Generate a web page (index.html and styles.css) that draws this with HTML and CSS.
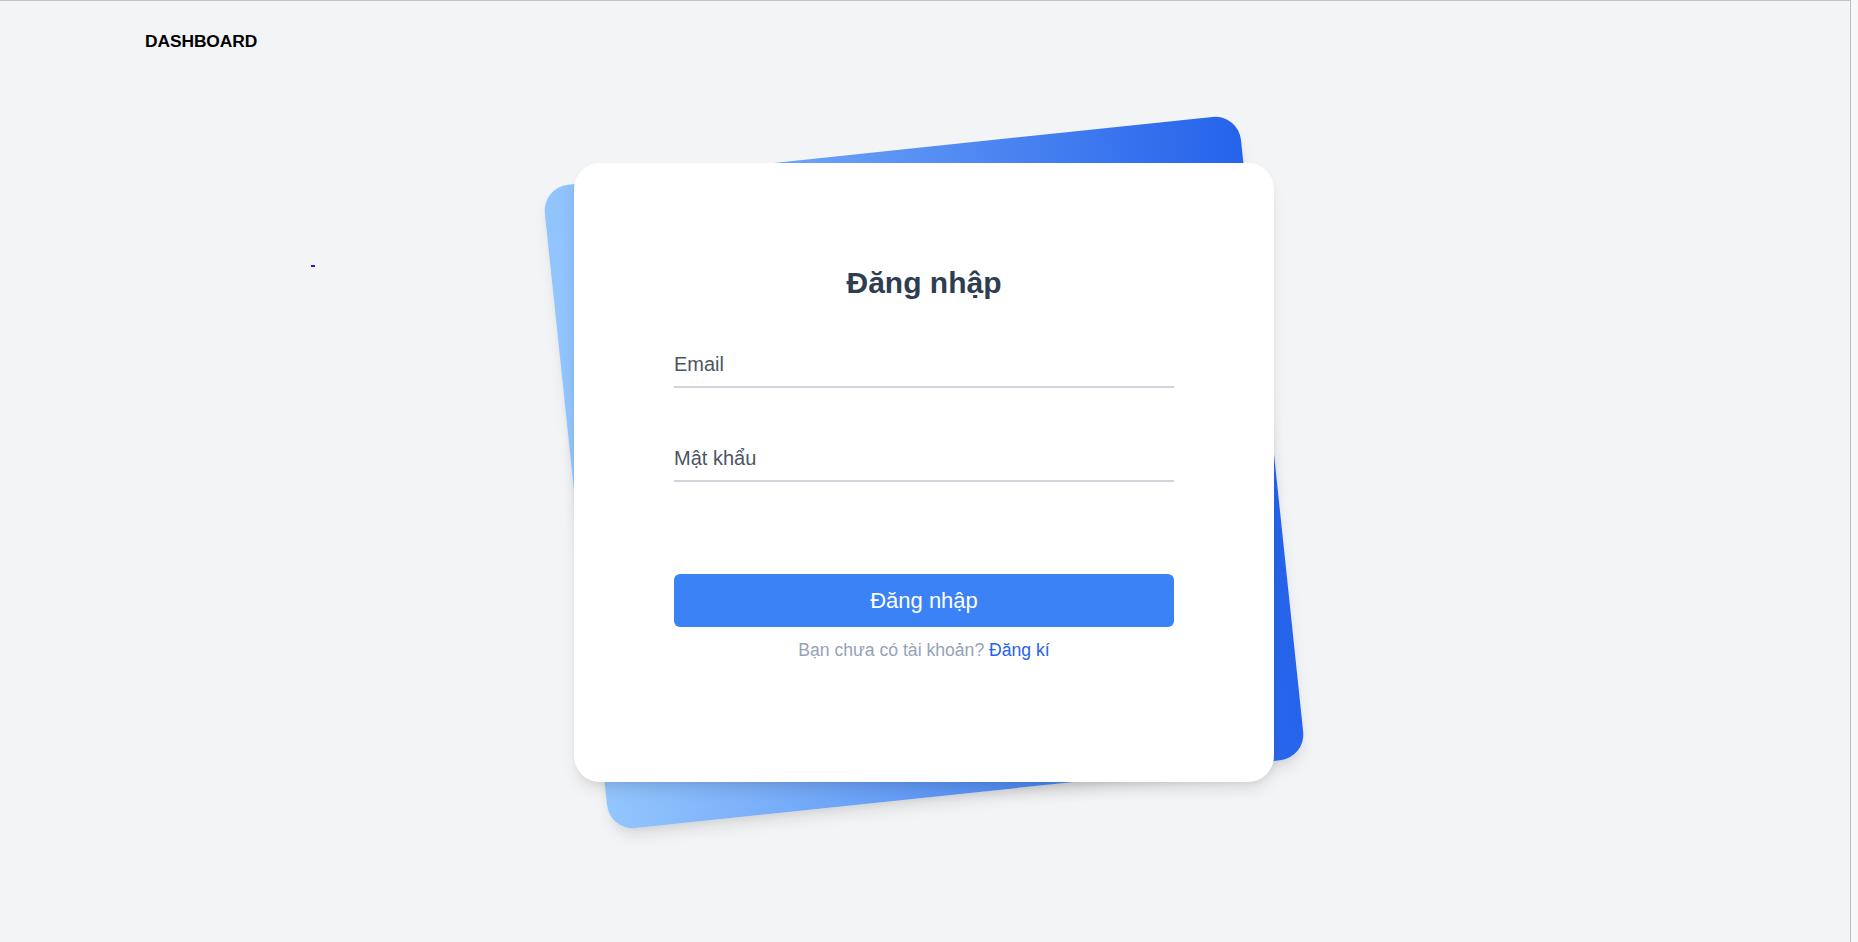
FILE: index.html
```html
<!DOCTYPE html>
<html lang="vi">
<head>
<meta charset="utf-8">
<title>Đăng nhập</title>
<link rel="stylesheet" href="styles.css">
</head>
<body>
<div class="frame">
  <header class="topbar">
    <span class="brand">DASHBOARD</span>
  </header>
  <a class="stray" href="#"></a>
  <main class="stage">
    <div class="card-wrap">
      <div class="card-back"></div>
      <form class="card">
        <h1 class="title">Đăng nhập</h1>
        <input class="field field-first" type="email" placeholder="Email">
        <input class="field field-second" type="password" placeholder="Mật khẩu">
        <button class="submit" type="button">Đăng nhập</button>
        <p class="signup">Bạn chưa có tài khoản? <a href="#">Đăng kí</a></p>
      </form>
    </div>
  </main>
</div>
</body>
</html>
```

FILE: styles.css
```css
html, body {
  margin: 0;
  padding: 0;
  height: 100%;
}
body {
  background: #f7f7f7;
  font-family: "Liberation Sans", Arial, sans-serif;
  overflow: hidden;
}
.frame {
  box-sizing: border-box;
  width: 1851px;
  height: 942px;
  border-top: 1px solid #c4c4c4;
  border-right: 1px solid #bdbdbd;
  background: #f3f4f6;
  display: grid;
  grid-template-columns: 1fr;
  grid-template-rows: 1fr;
}
.topbar {
  grid-area: 1 / 1;
  align-self: start;
  justify-self: start;
  padding: 30px 0 0 145px;
}
.brand {
  font-size: 17.4px;
  font-weight: 700;
  color: #000;
  letter-spacing: -0.1px;
}
.stray {
  grid-area: 1 / 1;
  align-self: start;
  justify-self: start;
  margin: 264px 0 0 311px;
  width: 4px;
  height: 2px;
  background: #1515ff;
}
.stage {
  grid-area: 1 / 1;
  display: flex;
  align-items: center;
  justify-content: center;
}
.card-wrap {
  position: relative;
  width: 700px;
  margin: 2px 2px 0 0;
}
.card-back {
  position: absolute;
  top: -14px;
  bottom: -14px;
  left: 0;
  right: 0;
  border-radius: 26px;
  background: linear-gradient(to right, #93c5fd, #2563eb);
  transform: rotate(-6deg);
  box-shadow: 0 10px 15px -3px rgba(0,0,0,0.1), 0 4px 6px -2px rgba(0,0,0,0.05);
}
.card {
  position: relative;
  box-sizing: border-box;
  width: 700px;
  margin: 0;
  padding: 102px 100px 119px;
  background: #fff;
  border-radius: 26px;
  box-shadow: 0 10px 15px -3px rgba(0,0,0,0.1), 0 4px 6px -2px rgba(0,0,0,0.05);
  display: flex;
  flex-direction: column;
}
.title {
  margin: 0;
  font-size: 30px;
  line-height: 36px;
  font-weight: 700;
  text-align: center;
  color: #2f3d50;
}
.field {
  display: block;
  box-sizing: border-box;
  width: 100%;
  height: 38px;
  margin: 0;
  padding: 0 0 8px;
  border: 0;
  border-bottom: 2px solid #d1d5db;
  background: transparent;
  font-family: "Liberation Sans", Arial, sans-serif;
  font-size: 20px;
  line-height: 28px;
  color: #4b5563;
  outline: none;
}
.field::placeholder {
  color: #4b5563;
  opacity: 1;
}
.field-first {
  margin-top: 49px;
}
.field-second {
  margin-top: 56px;
}
.submit {
  display: block;
  width: 100%;
  height: 53px;
  margin-top: 92px;
  padding: 0;
  border: 0;
  border-radius: 6px;
  background: #3b82f6;
  color: #fff;
  font-family: "Liberation Sans", Arial, sans-serif;
  font-size: 22px;
  line-height: 53px;
  cursor: pointer;
}
.signup {
  margin: 10px 0 0;
  text-align: center;
  font-size: 17.6px;
  line-height: 26px;
  color: #94a3b8;
}
.signup a {
  color: #2563eb;
  text-decoration: none;
}
```
